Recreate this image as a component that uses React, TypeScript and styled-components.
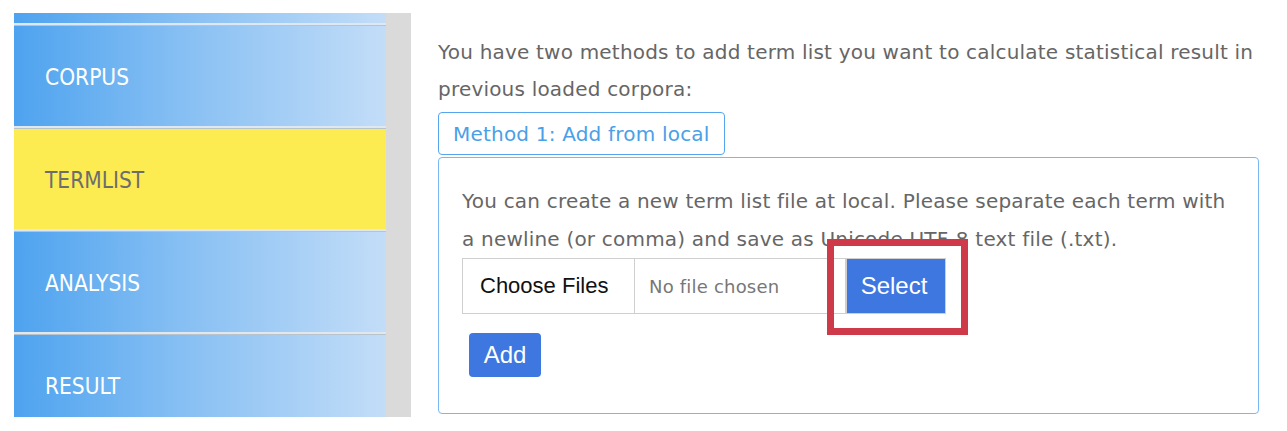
import React from "react";
import styled, { createGlobalStyle } from "styled-components";

const Global = createGlobalStyle`
  html, body { margin: 0; padding: 0; background: #ffffff; }
  body { font-family: "DejaVu Sans", Verdana, sans-serif; }
  * { box-sizing: border-box; }
`;

const Page = styled.div`
  display: flex;
  align-items: flex-start;
  padding: 13px 0 0 14px;
  width: 1287px;
  height: 431px;
  overflow: hidden;
`;

const Sidebar = styled.nav`
  display: flex;
  flex-direction: column;
  width: 372px;
  height: 404px;
  overflow: hidden;
`;

const Strip = styled.div`
  width: 25px;
  height: 404px;
  background: #dadada;
`;

const NavItem = styled.div<{ $active?: boolean; $h: number }>`
  flex: 0 0 auto;
  height: ${(p) => p.$h}px;
  display: flex;
  align-items: center;
  padding-left: 31px;
  padding-bottom: 1px;
  font-family: "DejaVu Sans Condensed", "DejaVu Sans", sans-serif;
  font-size: 22.5px;
  color: ${(p) => (p.$active ? "#6d6d6d" : "#ffffff")};
  background: ${(p) =>
    p.$active
      ? "#fdeb52"
      : "linear-gradient(to right, #4ea3ef 0%, #86bff3 45%, #c3ddf8 100%)"};
  border-bottom: 1px solid #b9c3cc;
  box-shadow: inset 0 -2px 0 #dfe8f0;
`;

const Main = styled.main`
  display: flex;
  flex-direction: column;
  align-items: flex-start;
  width: 821px;
  margin-left: 27px;
  padding-top: 21px;
`;

const Intro = styled.p`
  margin: 0;
  font-size: 20px;
  letter-spacing: 0.2px;
  line-height: 37px;
  color: #666666;
`;

const MethodTab = styled.button`
  margin-top: 4px;
  height: 43px;
  padding: 0 14px;
  background: #ffffff;
  border: 1px solid #56a6ee;
  border-radius: 4px;
  font-family: "DejaVu Sans", Verdana, sans-serif;
  font-size: 20px;
  letter-spacing: 0.2px;
  color: #4aa0e8;
`;

const Panel = styled.section`
  margin-top: 2px;
  width: 821px;
  height: 257px;
  border: 1px solid #79b8f2;
  border-radius: 4px;
  padding: 24px 23px 0 23px;
  display: flex;
  flex-direction: column;
  align-items: flex-start;
`;

const Help = styled.p`
  margin: 0;
  font-size: 20px;
  letter-spacing: 0.2px;
  line-height: 38px;
  color: #666666;
`;

const FileRow = styled.div`
  position: relative;
  display: flex;
  align-items: stretch;
  height: 56px;
`;

const ChooseBox = styled.div`
  width: 173px;
  display: flex;
  align-items: center;
  padding-left: 17px;
  border: 1px solid #cfcfcf;
  font-family: "Liberation Sans", Arial, sans-serif;
  font-size: 22px;
  color: #111111;
`;

const FileName = styled.div`
  width: 211px;
  display: flex;
  align-items: center;
  padding-left: 14px;
  border: 1px solid #cfcfcf;
  border-left: none;
  font-size: 18px;
  letter-spacing: 0.2px;
  color: #777777;
`;

const SelectBtn = styled.button`
  width: 100px;
  border: 1px solid #cfcfcf;
  background: #3f77e0;
  color: #ffffff;
  font-family: "Liberation Sans", Arial, sans-serif;
  font-size: 24px;
  padding: 0 4px 0 0;
`;

const Highlight = styled.div`
  position: absolute;
  left: 365px;
  top: -19px;
  width: 141px;
  height: 96px;
  border: 7px solid #cf3a4b;
  pointer-events: none;
`;

const AddBtn = styled.button`
  margin-top: 19px;
  margin-left: 7px;
  width: 72px;
  height: 44px;
  border: none;
  border-radius: 4px;
  background: #3f77e0;
  color: #ffffff;
  font-family: "Liberation Sans", Arial, sans-serif;
  font-size: 24px;
  padding: 0;
`;

const items = [
  { label: "", h: 13 },
  { label: "CORPUS", h: 103 },
  { label: "TERMLIST", h: 103, active: true },
  { label: "ANALYSIS", h: 103 },
  { label: "RESULT", h: 103 },
];

export default function App() {
  return (
    <>
      <Global />
      <Page>
        <Sidebar>
          {items.map((it, i) => (
            <NavItem key={i} $h={it.h} $active={it.active}>
              {it.label}
            </NavItem>
          ))}
        </Sidebar>
        <Strip />
        <Main>
          <Intro>
            You have two methods to add term list you want to calculate statistical result in previous loaded corpora:
          </Intro>
          <MethodTab>Method 1: Add from local</MethodTab>
          <Panel>
            <Help>
              You can create a new term list file at local. Please separate each term with a newline (or comma) and save as Unicode UTF-8 text file (.txt).
            </Help>
            <FileRow>
              <ChooseBox>Choose Files</ChooseBox>
              <FileName>No file chosen</FileName>
              <SelectBtn>Select</SelectBtn>
              <Highlight />
            </FileRow>
            <AddBtn>Add</AddBtn>
          </Panel>
        </Main>
      </Page>
    </>
  );
}
